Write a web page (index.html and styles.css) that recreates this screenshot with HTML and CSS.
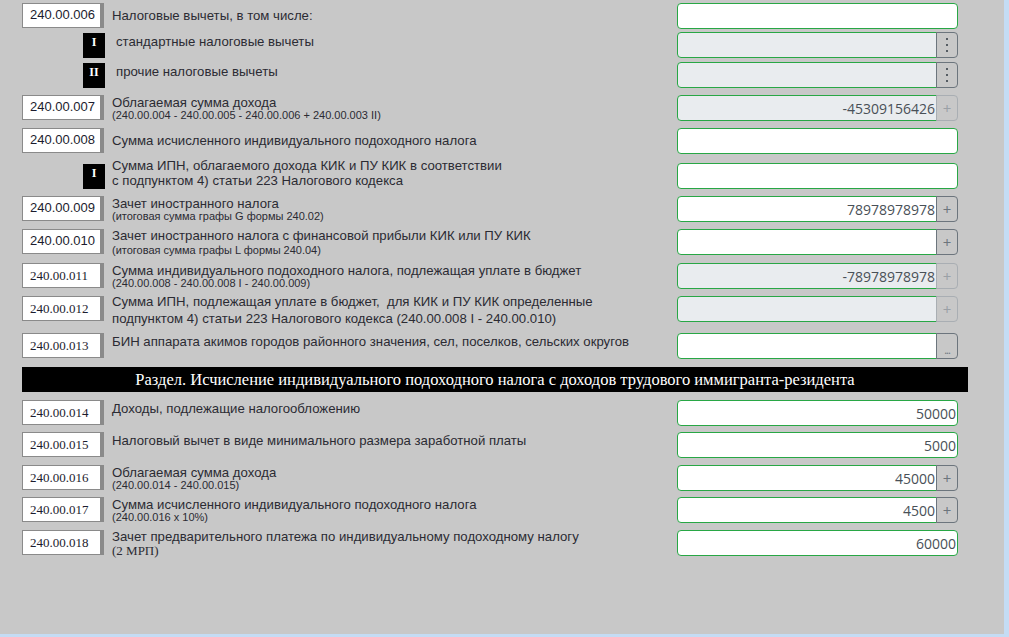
FILE: index.html
```html
<!DOCTYPE html>
<html lang="ru">
<head>
    <meta charset="UTF-8">
    <title>Форма 240.00</title>
    <link rel="stylesheet" href="styles.css">
</head>
<body>
    <div class="sheet">
        <div class="row mb-3">
            <div class="code">240.00.006</div>
            <div class="label">Налоговые вычеты, в том числе:</div>
            <div class="field"><input class="input" type="text" value=""></div>
        </div>
        <div class="row sub mb-4">
            <div class="badge">I</div>
            <div class="label top">стандартные налоговые вычеты</div>
            <div class="field has-btn">
                <input class="input" type="text" value="" readonly>
                <span class="addon"><span class="dots"><i></i><i></i><i></i></span></span>
            </div>
        </div>
        <div class="row sub">
            <div class="badge">II</div>
            <div class="label top">прочие налоговые вычеты</div>
            <div class="field has-btn">
                <input class="input" type="text" value="" readonly>
                <span class="addon"><span class="dots"><i></i><i></i><i></i></span></span>
            </div>
        </div>
        <div class="row">
            <div class="code">240.00.007</div>
            <div class="label">Облагаемая сумма дохода<small>(240.00.004 - 240.00.005 - 240.00.006 + 240.00.003 II)</small></div>
            <div class="field has-btn">
                <input class="input" type="text" value="-45309156426" readonly>
                <span class="addon off">+</span>
            </div>
        </div>
        <div class="row mb-9">
            <div class="code">240.00.008</div>
            <div class="label">Сумма исчисленного индивидуального подоходного налога</div>
            <div class="field"><input class="input" type="text" value=""></div>
        </div>
        <div class="row sub near">
            <div class="badge">I</div>
            <div class="label raised">Сумма ИПН, облагаемого дохода КИК и ПУ КИК в соответствии<br>с подпунктом 4) статьи 223 Налогового кодекса</div>
            <div class="field"><input class="input" type="text" value=""></div>
        </div>
        <div class="row">
            <div class="code">240.00.009</div>
            <div class="label">Зачет иностранного налога<small>(итоговая сумма графы G формы 240.02)</small></div>
            <div class="field has-btn">
                <input class="input" type="text" value="78978978978">
                <span class="addon">+</span>
            </div>
        </div>
        <div class="row mb-8">
            <div class="code">240.00.010</div>
            <div class="label">Зачет иностранного налога с финансовой прибыли КИК или ПУ КИК<small class="spaced">(итоговая сумма графы L формы 240.04)</small></div>
            <div class="field has-btn">
                <input class="input" type="text" value="">
                <span class="addon">+</span>
            </div>
        </div>
        <div class="row">
            <div class="code serif">240.00.011</div>
            <div class="label">Сумма индивидуального подоходного налога, подлежащая уплате в бюджет<small>(240.00.008 - 240.00.008 I - 240.00.009)</small></div>
            <div class="field has-btn">
                <input class="input" type="text" value="-78978978978" readonly>
                <span class="addon off">+</span>
            </div>
        </div>
        <div class="row mb-11">
            <div class="code serif">240.00.012</div>
            <div class="label tall">Сумма ИПН, подлежащая уплате в бюджет,&nbsp; для КИК и ПУ КИК определенные<br>подпунктом 4) статьи 223 Налогового кодекса (240.00.008 I - 240.00.010)</div>
            <div class="field has-btn">
                <input class="input" type="text" value="" readonly>
                <span class="addon off">+</span>
            </div>
        </div>
        <div class="row">
            <div class="code serif">240.00.013</div>
            <div class="label top">БИН аппарата акимов городов районного значения, сел, поселков, сельских округов</div>
            <div class="field has-btn">
                <input class="input" type="text" value="">
                <span class="addon more">...</span>
            </div>
        </div>

        <div class="section">Раздел. Исчисление индивидуального подоходного налога с доходов трудового иммигранта-резидента</div>

        <div class="row mb-6">
            <div class="code serif">240.00.014</div>
            <div class="label top">Доходы, подлежащие налогообложению</div>
            <div class="field"><input class="input" type="text" value="50000"></div>
        </div>
        <div class="row">
            <div class="code serif">240.00.015</div>
            <div class="label top">Налоговый вычет в виде минимального размера заработной платы</div>
            <div class="field"><input class="input" type="text" value="5000"></div>
        </div>
        <div class="row mb-6">
            <div class="code serif">240.00.016</div>
            <div class="label">Облагаемая сумма дохода<small>(240.00.014 - 240.00.015)</small></div>
            <div class="field has-btn">
                <input class="input" type="text" value="45000">
                <span class="addon">+</span>
            </div>
        </div>
        <div class="row">
            <div class="code serif">240.00.017</div>
            <div class="label">Сумма исчисленного индивидуального подоходного налога<small>(240.00.016 x 10%)</small></div>
            <div class="field has-btn">
                <input class="input" type="text" value="4500">
                <span class="addon">+</span>
            </div>
        </div>
        <div class="row">
            <div class="code serif">240.00.018</div>
            <div class="label">Зачет предварительного платежа по индивидуальному подоходному налогу<span class="note">(2 МРП)</span></div>
            <div class="field"><input class="input" type="text" value="60000"></div>
        </div>
    </div>
</body>
</html>
```

FILE: styles.css
```css
/* Reset */
* {
    margin: 0;
    padding: 0;
    box-sizing: border-box;
}

body {
    font-family: "Liberation Sans", Arial, sans-serif;
    color: #222;
    background-color: #c4dcf4;
    overflow: hidden;
}

/* Form sheet */
.sheet {
    width: 1004px;
    height: 634px;
    padding: 3px 0 0 22px;
    background-color: #c8c8c8;
    overflow: hidden;
}

.row {
    display: flex;
    align-items: center;
    height: 26px;
    margin-bottom: 7px;
}

.row.mb-3 { margin-bottom: 3px; }
.row.mb-4 { margin-bottom: 4px; }
.row.mb-6 { margin-bottom: 6px; }
.row.mb-8 { margin-bottom: 8px; }
.row.mb-9 { margin-bottom: 9px; }
.row.mb-11 { margin-bottom: 11px; }

/* Line code box */
.code {
    flex-shrink: 0;
    width: 82px;
    height: 25px;
    align-self: flex-start;
    background-color: #fff;
    border: 1px solid #8a8a8a;
    border-right-width: 4px;
    font-size: 13px;
    line-height: 21px;
    padding-left: 7px;
    color: #1c1c2e;
}

.code.serif {
    font-family: "Liberation Serif", "Times New Roman", serif;
    font-size: 13px;
    line-height: 23px;
    padding-left: 7px;
}

/* Roman numeral marker for sub lines */
.badge {
    flex-shrink: 0;
    width: 22px;
    height: 25px;
    margin-left: 61px;
    background-color: #000;
    color: #fff;
    font: bold 12px "Liberation Serif", "Times New Roman", serif;
    text-align: center;
    line-height: 19px;
}

.label {
    flex: 1;
    min-width: 0;
    margin-left: 8px;
    font-size: 13.2px;
    line-height: 14px;
    color: #2b2b33;
    white-space: nowrap;
}

.label.top {
    align-self: flex-start;
    padding-top: 2px;
}

.row.sub .label {
    margin-left: 11px;
    line-height: 15px;
}

.row.sub.near .label {
    margin-left: 7px;
}

.label.raised {
    padding-bottom: 6px;
}

.label.tall {
    line-height: 17px;
    padding-top: 2px;
}

.label small {
    display: block;
    font-size: 11px;
    line-height: 10px;
}

.label small.spaced {
    margin-top: 2px;
}

.label .note {
    display: block;
    font-family: "Liberation Serif", "Times New Roman", serif;
    font-size: 13px;
    line-height: 13px;
}

/* Value field */
.field {
    flex-shrink: 0;
    display: flex;
    width: 281px;
    height: 26px;
    margin-right: 46px;
}

.input {
    flex: 1;
    min-width: 0;
    height: 26px;
    border: 1px solid #28a745;
    border-radius: 4px;
    background-color: #fff;
    font: 14px "Open Sans", sans-serif;
    color: #495057;
    text-align: right;
    padding: 0 1px 0 8px;
    outline: none;
}

.input[readonly] {
    background-color: #e9ecef;
}

.field.has-btn .input {
    border-radius: 4px 0 0 4px;
}

.addon {
    flex-shrink: 0;
    display: flex;
    align-items: center;
    justify-content: center;
    width: 22px;
    margin-left: -1px;
    border: 1px solid #6c757d;
    border-radius: 0 4px 4px 0;
    font: 15px "Open Sans", sans-serif;
    color: #6c757d;
}

.addon.off {
    border-color: #a9aeb3;
    color: #9aa0a6;
}

.addon.more {
    align-items: flex-end;
    font-size: 11px;
    line-height: 16px;
    letter-spacing: -1px;
}

.dots {
    display: flex;
    flex-direction: column;
    gap: 4px;
}

.dots i {
    display: block;
    width: 2px;
    height: 2px;
    background-color: #555c63;
}

/* Section title bar */
.section {
    height: 25px;
    margin: 8px 36px 8px 0;
    background-color: #000;
    color: #fff;
    font: 16.5px "Liberation Serif", "Times New Roman", serif;
    line-height: 25px;
    text-align: center;
}
```
